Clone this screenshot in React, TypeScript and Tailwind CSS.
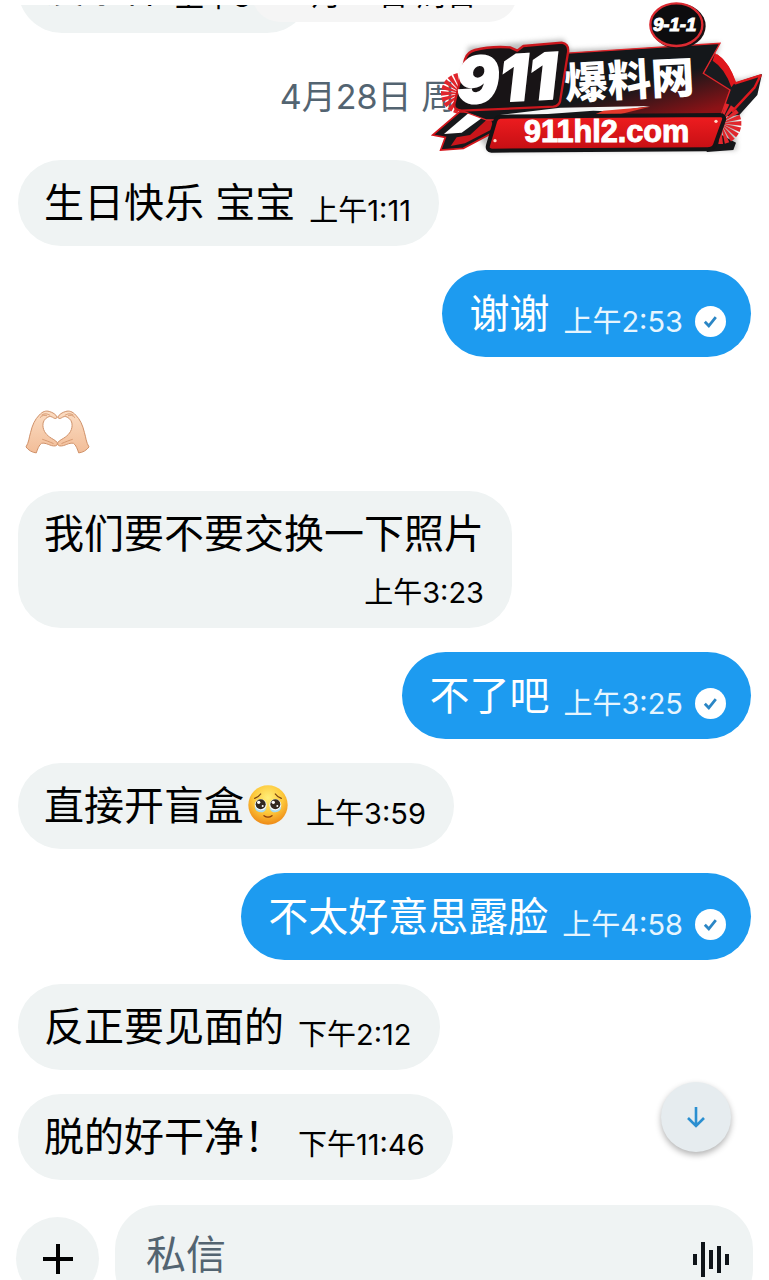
import type { ReactNode } from "react";

type Message = {
  id: number;
  side: "in" | "out";
  text: ReactNode;
  time: string;
  stacked?: boolean;
};

function TearyFace() {
  return (
    <svg viewBox="0 0 120 120" className="mx-1 inline-block size-10 align-[-5px]" role="img" aria-label="🥹">
      <defs>
        <radialGradient id="face" cx="50%" cy="32%" r="68%">
          <stop offset="0" stopColor="#ffef7a" />
          <stop offset="0.55" stopColor="#fdc93c" />
          <stop offset="1" stopColor="#ee8a16" />
        </radialGradient>
      </defs>
      <circle cx="60" cy="60" r="59" fill="url(#face)" />
      <path d="M20 40Q32 36 38 27M100 40Q88 36 82 27" fill="none" stroke="#7a4310" strokeWidth="4" strokeLinecap="round" />
      <circle cx="38" cy="60" r="18" fill="#f4fbff" />
      <circle cx="82" cy="60" r="18" fill="#f4fbff" />
      <circle cx="38" cy="58" r="15" fill="#33291f" />
      <circle cx="82" cy="58" r="15" fill="#33291f" />
      <circle cx="32" cy="52" r="5" fill="#fff" />
      <circle cx="76" cy="52" r="5" fill="#fff" />
      <circle cx="44" cy="63" r="3" fill="#fff" />
      <circle cx="88" cy="63" r="3" fill="#fff" />
      <path d="M20 66Q38 86 56 68Q52 82 38 82Q22 80 20 66ZM64 68Q82 86 100 66Q98 80 82 82Q68 82 64 68Z" fill="#a5dcf5" />
      <path d="M48 92Q60 101 72 92" fill="none" stroke="#8a3d0d" strokeWidth="4" strokeLinecap="round" />
    </svg>
  );
}

function HeartHands() {
  return (
    <svg viewBox="0 0 196 138" className="h-[46px] w-[65px]" role="img" aria-label="🫶🏻">
      <defs>
        <linearGradient id="skin" x1="0" y1="0" x2="0" y2="1">
          <stop offset="0" stopColor="#fbdcc2" />
          <stop offset="1" stopColor="#f2bd98" />
        </linearGradient>
        <g id="hand">
          <path
            d="M3 114C12 100 12 86 17 70C22 48 30 31 43 18C53 7 63 4 73 7C84 10 93 16 97 24C96 29 91 29 87 27C80 22 75 21 69 24C59 29 53 39 54 50C55 67 65 79 80 88C90 94 98 98 98 105C96 112 89 112 80 110C68 106 60 101 50 103C42 108 38 121 34 132C22 131 10 124 3 114Z"
            fill="url(#skin)"
            stroke="#cf9068"
            strokeWidth="3"
          />
          <path d="M50 18C60 12 68 14 76 19M45 26C52 18 59 17 66 20M52 91C62 94 72 98 86 104" fill="none" stroke="#d79a72" strokeWidth="3" />
        </g>
      </defs>
      <use href="#hand" />
      <use href="#hand" transform="translate(196 0) scale(-1 1)" />
    </svg>
  );
}

function SentCheck() {
  return (
    <svg viewBox="0 0 31 31" className="size-[31px] shrink-0" role="img" aria-label="已发送">
      <circle cx="15.5" cy="15.5" r="15.5" fill="#fff" />
      <path d="M9.8 15.8L13.8 19.8L20.8 11.2" fill="none" stroke="#2b86c5" strokeWidth="2.8" />
    </svg>
  );
}

function Burst({ x, y }: { x: number; y: number }) {
  const angles = [0, 18, 36, 54, 72, 90, 108, 126, 144, 162, 180, 198, 216, 234, 252, 270, 288, 306, 324, 342];
  return (
    <g>
      {angles.map((a) => (
        <path key={a} d={`M${x} ${y}l-62 -7v14z`} fill="#e0262c" transform={`rotate(${a} ${x} ${y})`} />
      ))}
    </g>
  );
}

function SiteLogo() {
  return (
    <svg viewBox="0 0 1047 495" className="absolute top-0 right-0 w-[349px]" role="img" aria-label="911爆料网 911hl2.com">
      <defs>
        <linearGradient id="bar" x1="0" y1="0" x2="0" y2="1">
          <stop offset="0" stopColor="#f01d20" />
          <stop offset="1" stopColor="#c40e13" />
        </linearGradient>
        <linearGradient id="panel" x1="0" y1="0" x2="1" y2="1">
          <stop offset="0.6" stopColor="#14171a" />
          <stop offset="0.9" stopColor="#8d1216" />
        </linearGradient>
        <filter id="soft" x="-10%" y="-10%" width="120%" height="120%">
          <feGaussianBlur stdDeviation="8" />
        </filter>
      </defs>

      <path d="M145 140L430 118L450 150L900 130L870 225L960 240L1025 225L945 370L950 450L210 455L110 330Z" fill="#777" opacity="0.5" filter="url(#soft)" />
      <Burst x={125} y={280} />

      {/* arrow tail */}
      <path d="M120 335L38 405L76 412L62 450L130 445L215 400L250 340Z" fill="#17181b" stroke="#d3151b" strokeWidth="5" />
      <path d="M145 340L72 402L125 398L205 340Z" fill="#fff" />
      <path d="M210 350L150 405L110 412L92 438L135 430L222 385Z" fill="#c9151a" />

      {/* arrow tip */}
      <path d="M885 160L945 248L1026 222L1012 285L958 345L905 350L850 220Z" fill="#191b1f" />
      <path d="M890 166Q925 190 946 250L1022 226L1004 262L936 335" fill="none" stroke="#e0191e" strokeWidth="7" strokeLinejoin="round" />
      <path d="M885 160Q925 180 946 246L934 262Q915 205 878 182Z" fill="#df171c" />

      <path d="M870 350L915 350L905 405L948 428L940 450L860 456Z" fill="#151619" />
      <Burst x={902} y={370} />
      <path d="M430 160L900 130L850 220L930 270L900 355L200 360L120 330Z" fill="url(#panel)" stroke="#e2252a" strokeWidth="4" />
      <path d="M240 345L420 323L690 318L520 345Z" fill="#f5f5f5" />
      <path d="M300 348L520 332L600 335L560 348Z" fill="#15171a" />
      <path d="M520 345L550 332L690 320L600 343Z" fill="#e4392b" />

      <path d="M165 150Q210 138 270 142L292 152L310 138L425 128Q448 132 444 158L420 305Q416 318 400 320L125 332Q98 330 104 308L135 178Q142 156 165 150Z" fill="#181416" stroke="#cb171d" strokeWidth="7" strokeLinejoin="round" />
      <text
        x="112"
        y="312"
        transform="rotate(-3 112 312)"
        fontFamily="Inter, sans-serif"
        fontSize="192"
        fontWeight="900"
        fontStyle="italic"
        fill="#fff"
        stroke="#fff"
        strokeWidth="5"
      >
        911
      </text>
      <text
        x="436"
        y="298"
        transform="rotate(-3 436 298)"
        fontFamily="'Noto Sans CJK SC', sans-serif"
        fontSize="130"
        fontWeight="900"
        fill="#fff"
      >
        爆料网
      </text>

      {/* address bar */}
      <path d="M240 350L900 345Q915 347 912 360L885 435Q880 448 862 448L215 452Q200 450 204 436L225 365Q228 352 240 350Z" fill="url(#bar)" stroke="#141416" strokeWidth="12" />
      <circle cx="225" cy="422" r="5" fill="#ffd9c8" />
      <circle cx="888" cy="364" r="5" fill="#ffd9c8" />
      <text
        x="312"
        y="427"
        fontFamily="'Liberation Sans', sans-serif"
        fontSize="92"
        fontWeight="700"
        fill="#fff"
        stroke="#fff"
        strokeWidth="3"
      >
        911hl2.com
      </text>

      {/* badge */}
      <ellipse cx="775" cy="78" rx="82" ry="68" fill="#1a1114" />
      <ellipse cx="769" cy="74" rx="78" ry="64" fill="#0d0c0e" stroke="#dc2a31" strokeWidth="7" />
      <text
        x="764"
        y="92"
        textAnchor="middle"
        fontFamily="'Liberation Sans', sans-serif"
        fontSize="56"
        fontWeight="700"
        fontStyle="italic"
        fill="#fff"
        stroke="#fff"
        strokeWidth="3"
      >
        9-1-1
      </text>
    </svg>
  );
}

function Bubble({ message }: { message: Message }) {
  const { side, text, time, stacked } = message;

  if (stacked) {
    return (
      <li className="flex flex-col self-start rounded-[43px] bg-[#eff3f3] pt-[18px] pr-7 pb-[18px] pl-[26px] text-black">
        <p className="text-[40px] leading-[50px]">{text}</p>
        <time className="mt-[17px] self-end text-[29px] leading-[34px]">{time}</time>
      </li>
    );
  }

  if (side === "out") {
    return (
      <li className="flex items-end self-end rounded-full bg-[#1d9bf0] pt-[19px] pr-[25px] pb-[18px] pl-[27px] text-white">
        <p className="text-[40px] leading-[50px]">{text}</p>
        <time className="ml-[14px] text-[29px] leading-[34px] text-[#e6f5fe]">{time}</time>
        <span className="mb-[2px] ml-3">
          <SentCheck />
        </span>
      </li>
    );
  }

  return (
    <li className="flex items-end self-start rounded-full bg-[#eff3f3] pt-[18px] pr-7 pb-[18px] pl-[26px] text-black">
      <p className="text-[40px] leading-[50px]">{text}</p>
      <time className="ml-[14px] text-[29px] leading-[34px]">{time}</time>
    </li>
  );
}

const before: Message[] = [
  { id: 1, side: "in", text: "生日快乐 宝宝", time: "上午1:11" },
  { id: 2, side: "out", text: "谢谢", time: "上午2:53" },
];

const after: Message[] = [
  { id: 3, side: "in", text: "我们要不要交换一下照片", time: "上午3:23", stacked: true },
  { id: 4, side: "out", text: "不了吧", time: "上午3:25" },
  {
    id: 5,
    side: "in",
    text: (
      <>
        直接开盲盒
        <TearyFace />
      </>
    ),
    time: "上午3:59",
  },
  { id: 6, side: "out", text: "不太好意思露脸", time: "上午4:58" },
  { id: 7, side: "in", text: "反正要见面的", time: "下午2:12" },
  { id: 8, side: "in", text: "脱的好干净！", time: "下午11:46" },
];

export default function App() {
  return (
    <main className="relative flex h-screen flex-col overflow-hidden bg-white pt-[5px] font-[Inter,'Noto_Sans_CJK_SC',sans-serif]" lang="zh-CN">
      <section className="relative shrink-0 px-[18px]">
        {/* tail of the previous day, scrolled under the top edge */}
        <div className="relative flex h-7 items-end overflow-hidden">
          <div className="flex items-end rounded-full bg-[#eff3f3] pt-4 pr-7 pb-[18px] pl-[26px]">
            <p className="text-[40px] leading-[54px]">没条件</p>
            <time className="ml-[11px] text-[29px] leading-[36px]">上午8:11</time>
          </div>
          <div className="absolute inset-x-0 bottom-[11px] mx-auto w-fit rounded-full bg-[#f5f5f5] px-10 py-[7px] text-[30px] leading-[42px]">
            4月28日 周日
          </div>
        </div>

        <h2 className="mt-[39px] text-center text-[34px] leading-[50px] text-[#536471]">4月28日 周日</h2>

        <ul className="mt-[38px] flex flex-col gap-6">
          {before.map((m) => (
            <Bubble key={m.id} message={m} />
          ))}
          <li className="flex h-[86px] items-end pb-3 pl-[7px]">
            <HeartHands />
          </li>
          {after.map((m) => (
            <Bubble key={m.id} message={m} />
          ))}
        </ul>

        <button
          type="button"
          aria-label="滚动到底部"
          className="absolute right-[38px] bottom-7 flex size-[70px] items-center justify-center rounded-full bg-[#e6ecef] shadow-[0_3px_6px_rgba(0,0,0,0.3)]"
        >
          <svg viewBox="0 0 24 24" className="size-6" fill="none" stroke="#2b8fd0" strokeWidth="2.6">
            <path d="M12 2V21M4 13L12 21L20 13" />
          </svg>
        </button>
      </section>

      <form className="mt-[25px] flex shrink-0 items-start gap-4 px-4" onSubmit={(e) => e.preventDefault()}>
        <button type="button" aria-label="添加" className="mt-3 flex size-[83px] shrink-0 items-center justify-center rounded-full bg-[#eff3f3]">
          <svg viewBox="0 0 32 32" className="size-8" stroke="#000" strokeWidth="4">
            <path d="M16 1V31M1 16H31" />
          </svg>
        </button>
        <div className="flex h-[108px] min-w-0 flex-1 items-center rounded-[44px] bg-[#eff3f3] pr-6 pl-[31px]">
          <input
            type="text"
            aria-label="私信"
            placeholder="私信"
            className="mb-2 h-14 min-w-0 flex-1 bg-transparent text-[40px] text-black outline-none placeholder:text-[#536471]"
          />
          <button type="button" aria-label="语音消息" className="shrink-0">
            <svg viewBox="0 0 36 36" className="size-9" fill="#0f1419">
              <rect x="0" y="13" width="4" height="11" />
              <rect x="8" y="1" width="4" height="35" />
              <rect x="16" y="9" width="4" height="19" />
              <rect x="24" y="5" width="4" height="27" />
              <rect x="32" y="13" width="4" height="11" />
            </svg>
          </button>
        </div>
      </form>

      <SiteLogo />
    </main>
  );
}
